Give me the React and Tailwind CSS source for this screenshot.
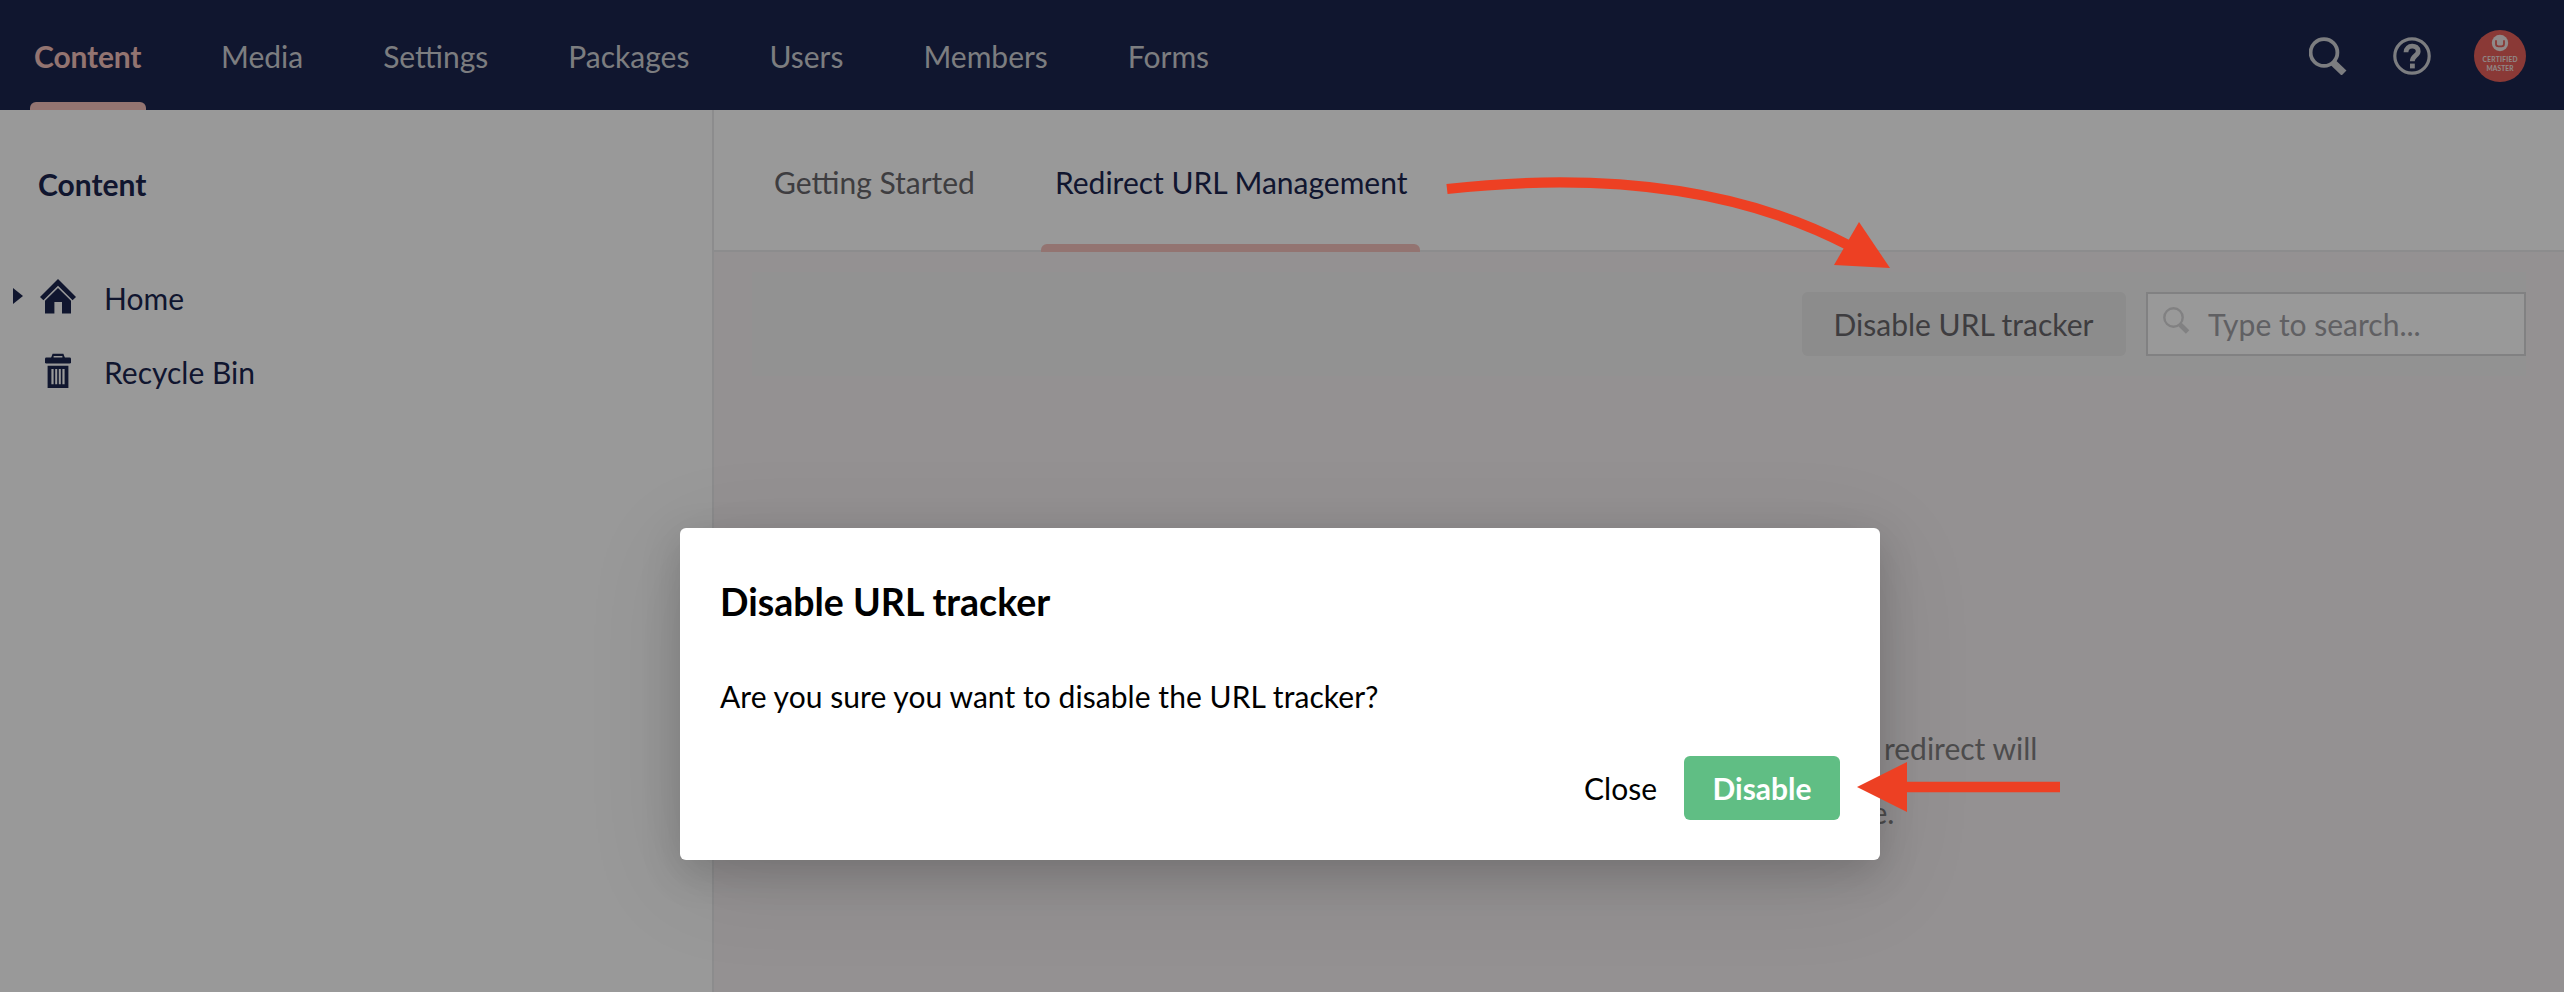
const NAV = ["Media", "Settings", "Packages", "Users", "Members", "Forms"];

function SearchIcon({ className }) {
  return (
    <svg className={className} viewBox="0 0 38 38" fill="none" stroke="currentColor">
      <circle cx="15" cy="15.5" r="13.4" strokeWidth="3.8" />
      <path d="M24 25.5 L35 36" strokeWidth="7" />
    </svg>
  );
}

function ThinSearchIcon({ className }) {
  return (
    <svg className={className} viewBox="0 0 27 27" fill="none" stroke="currentColor">
      <circle cx="10.5" cy="10.5" r="9.2" strokeWidth="2.4" />
      <path d="M17 17.5 L24.6 25" strokeWidth="4.8" />
    </svg>
  );
}

function HelpIcon({ className }) {
  return (
    <svg className={className} viewBox="0 0 38 38" fill="none" stroke="currentColor">
      <circle cx="19" cy="19" r="17.2" strokeWidth="3.2" />
      <path d="M13 15.2 C13 7.2 25.2 7.2 25.2 14.2 C25.2 18.8 19.3 18.6 19.3 24.2" strokeWidth="4.8" />
      <rect x="17" y="26.6" width="4.8" height="4.8" fill="currentColor" stroke="none" />
    </svg>
  );
}

function Avatar() {
  return (
    <svg className="size-[52px]" viewBox="0 0 52 52">
      <circle cx="26" cy="26" r="26" fill="#e6605a" />
      <circle cx="26" cy="13" r="8.2" fill="#f0e4e4" />
      <path d="M22 10.3 V14 Q22 16.3 24.5 16.3 H27.5 Q30 16.3 30 14 V10.3" fill="none" stroke="#e6605a" strokeWidth="1.8" />
      <text x="26" y="32" textAnchor="middle" fontSize="6.6" fontWeight="700" fill="#f0e4e4" textLength="35">CERTIFIED</text>
      <text x="26" y="40.6" textAnchor="middle" fontSize="6.6" fontWeight="700" fill="#f0e4e4" textLength="27">MASTER</text>
    </svg>
  );
}

function HomeIcon() {
  return (
    <svg className="h-[35px] w-9" viewBox="0 0 36 35" fill="currentColor">
      <path d="M18 0 L36 18 L32.6 21.2 L18 6.8 L3.4 21.2 L0 18 Z" />
      <path d="M18 9 L31 21.8 V34.5 H22 V23 H14.4 V34.5 H5 V21.8 Z" />
    </svg>
  );
}

function TrashIcon() {
  return (
    <svg className="h-[35px] w-[26px]" viewBox="0 0 26 35" fill="currentColor">
      <path d="M6 5 L7.6 0.8 H18.4 L20 5 H17.4 V2.9 H8.6 V5 Z" />
      <rect x="0" y="4.4" width="26" height="6.2" rx="1.4" />
      <path fillRule="evenodd" d="M2.6 12.8 H23.4 V35 H2.6 Z M6.4 16 V31.2 H8.6 V16 Z M10.2 16 V31.2 H12.2 V16 Z M13.8 16 V31.2 H15.8 V16 Z M17.4 16 V31.2 H19.6 V16 Z" />
    </svg>
  );
}

function Header() {
  return (
    <header className="flex h-[110px] shrink-0 items-stretch justify-between bg-[#1b264f] pr-[38px] pl-[30px] text-[#cfd0d5]">
      <nav className="flex items-stretch">
        <div className="relative mr-[75px] flex w-[116px] items-center px-1 pt-0.5 font-bold tracking-[-0.15px] text-[#f5c1bc]">
          Content
          <span className="absolute inset-x-0 bottom-0 h-2 rounded-t-md bg-[#f5c1bc]" />
        </div>
        <ul className="flex items-center gap-20 pt-0.5">
          {NAV.map((n) => (
            <li key={n}>{n}</li>
          ))}
        </ul>
      </nav>
      <div className="flex items-center pt-0.5">
        <SearchIcon className="mr-[46px] size-[38px]" />
        <HelpIcon className="mr-[43px] size-[38px]" />
        <Avatar />
      </div>
    </header>
  );
}

function Sidebar() {
  return (
    <aside className="w-[714px] shrink-0 border-r-2 border-[#e9e9eb] bg-white text-[#1b264f]">
      <h2 className="pt-[53px] pl-[38px] leading-[42px] font-bold">Content</h2>
      <ul className="pt-[54px]">
        <li className="flex h-[74px] items-center">
          <svg className="mr-[17px] ml-[13px] h-4 w-[10px]" viewBox="0 0 10 16" fill="currentColor">
            <path d="M0 0 L10 8 L0 16 Z" />
          </svg>
          <HomeIcon />
          <span className="pt-1 pl-7">Home</span>
        </li>
        <li className="flex h-[74px] items-center pl-[45px]">
          <TrashIcon />
          <span className="pt-1 pl-[33px]">Recycle Bin</span>
        </li>
      </ul>
    </aside>
  );
}

function Dashboard() {
  return (
    <main className="flex flex-1 flex-col bg-[#f7f2f3] text-[#68676b]">
      <div className="flex h-[142px] shrink-0 border-b-2 border-[#e9e9eb] bg-white pl-[60px]">
        <div className="flex items-center pt-1">Getting Started</div>
        <div className="relative ml-[66px] flex items-center pt-1 pr-3 pl-3.5 text-[#1b264f]">
          Redirect URL Management
          <span className="absolute inset-x-0 -bottom-0.5 h-2 rounded-t-md bg-[#f5c1bc]" />
        </div>
      </div>
      <div className="mx-[38px] mt-5 flex h-[104px] shrink-0 items-center justify-end gap-5 bg-[#f3f3f3]">
        <button className="h-16 w-[324px] rounded-md bg-[#e9e9e9] pr-px">Disable URL tracker</button>
        <div className="flex h-16 w-[380px] items-start border-2 border-[#d8d7d9] bg-white text-[#a1a0a5]">
          <ThinSearchIcon className="mt-[13px] ml-[15px] size-[27px] text-[#d8d7d9]" />
          <span className="pl-[18px] leading-[60px]">Type to search...</span>
        </div>
      </div>
      <p className="mt-[340px] ml-[494px] w-[850px] text-center leading-[64px] text-[#817f81]">
        When a published page gets renamed or moved a redirect will automatically be made to the new page.
      </p>
    </main>
  );
}

function ConfirmDialog() {
  return (
    <div className="absolute top-[528px] left-[680px] flex h-[332px] w-[1200px] flex-col rounded-md bg-white px-10 text-black shadow-[0_20px_100px_rgba(0,0,0,0.1),0_12px_40px_rgba(0,0,0,0.16)]">
      <h1 className="mt-[49px] text-[37.5px] leading-[50px] font-bold">Disable URL tracker</h1>
      <p className="mt-12 leading-[42px] tracking-[0.06px]">Are you sure you want to disable the URL tracker?</p>
      <div className="mt-[39px] flex items-center justify-end gap-[27px]">
        <button>Close</button>
        <button className="h-16 w-[156px] rounded-md bg-[#60be84] font-bold text-white">Disable</button>
      </div>
    </div>
  );
}

function Arrows() {
  return (
    <svg className="absolute inset-0 h-[992px] w-[2564px]" viewBox="0 0 2564 992">
      <g fill="none" stroke="#ed4023" strokeWidth="10.3">
        <path d="M1447 189 Q1690 162 1850 246" />
        <path d="M1905 787 H2060" />
      </g>
      <g fill="#ed4023">
        <path d="M1890 268 L1859 222 L1834 265 Z" />
        <path d="M1857 787 L1907 762 V812 Z" />
      </g>
    </svg>
  );
}

export default function App() {
  return (
    <div className="relative flex h-[992px] w-[2564px] flex-col overflow-hidden font-[Lato,sans-serif] text-[30px] leading-[42px]">
      <Header />
      <div className="flex flex-1">
        <Sidebar />
        <Dashboard />
      </div>
      <div className="absolute inset-0 bg-black/40" />
      <ConfirmDialog />
      <Arrows />
    </div>
  );
}
